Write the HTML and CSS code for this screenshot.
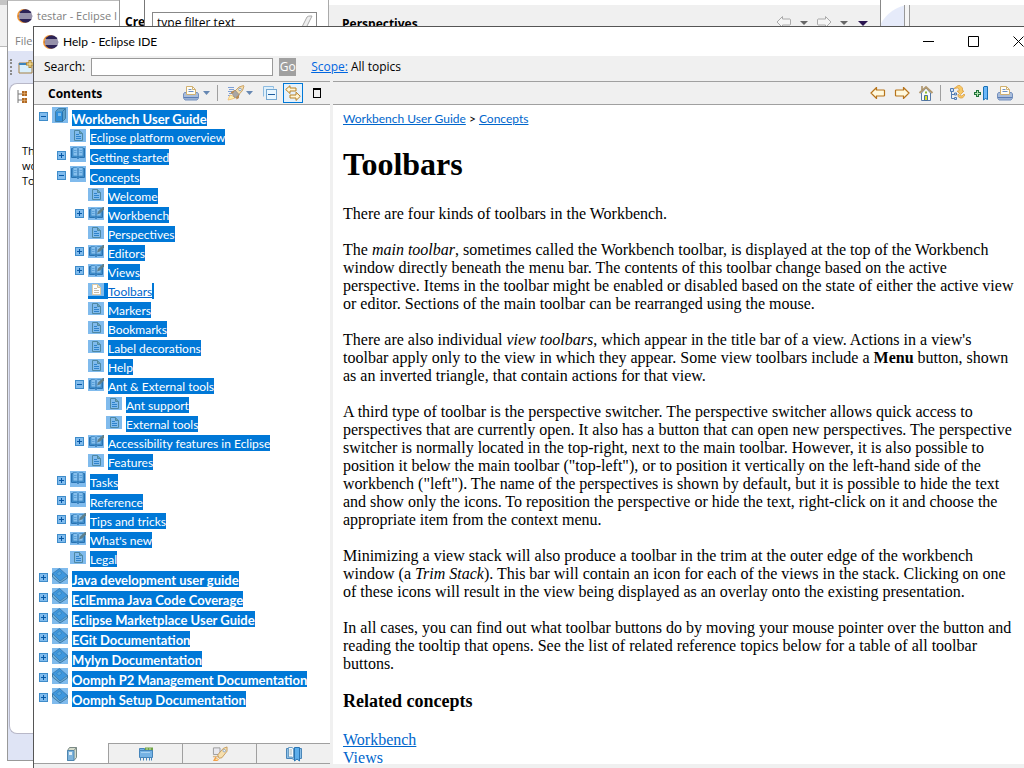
FILE: index.html
```
<!DOCTYPE html>
<html lang="en">
<head>
<meta charset="utf-8">
<title>Help - Eclipse IDE</title>
<link rel="stylesheet" href="styles.css">
</head>
<body>
<svg class="defs" aria-hidden="true">
  <symbol id="eclipse" viewBox="0 0 16 16"><circle cx="7" cy="8" r="7" fill="#f0983a"/><circle cx="8.500" cy="8" r="6.800" fill="#2c2255"/><path d="M2 6h13M2 8h13M2 10h13" stroke="#fff" stroke-width="1"/></symbol>
  <symbol id="toc-open" viewBox="0 0 16 16"><rect width="16" height="16" fill="#80bbed"/><path d="M3.500 4.500l3-3h7v10l-3 3h-7z" fill="#5a9fcb" stroke="#4280a8"/><path d="M4 4.500h6v9.500H4z" fill="#2f8fdb"/><path d="M6 6h3v3H6z" fill="#7cbbea"/><path d="M10.500 4.500v10M10.500 4.500l3-3" stroke="#2a73ad"/></symbol>
  <symbol id="toc-closed" viewBox="0 0 16 16"><rect width="16" height="16" fill="#80bbed"/><path d="M.500 6v3l7.500 6 7.500-5V7.500z" fill="#6fadd6" stroke="#3c7ba9"/><path d="M.500 5.500L7.500.500l8 7L8 13z" fill="#3f97de" stroke="#397aad" stroke-width=".8"/><path d="M4.500 5.500l3-2.300 2.500 2L7 7.700z" fill="#5ba7dd" stroke="#2f7cb9" stroke-width=".6"/></symbol>
  <symbol id="page" viewBox="0 0 16 13"><rect width="16" height="13" fill="#80bbed"/><path d="M4.500 1.500h5l3 3v7h-8z" fill="#80bbed" stroke="#4f88a3"/><path d="M9.500 1.500v3h3" fill="#6ba3b5" stroke="#4f88a3"/><path d="M6 5.500h3M6 7.500h5M6 9.500h5" stroke="#2f83cb"/></symbol>
  <symbol id="page-current" viewBox="0 0 16 13"><rect width="16" height="13" fill="#80bbed"/><path d="M4.500 1.500h5l3 3v7h-8z" fill="#fff" stroke="#e0cba4"/><path d="M9.500 1.500v3h3" fill="#f2e2c0" stroke="#d9c294"/><path d="M6 5.500h3M6 7.500h5M6 9.500h5" stroke="#c2bcae"/></symbol>
  <symbol id="book" viewBox="0 0 16 16"><rect width="16" height="16" fill="#80bbed"/><path d="M1.500 2.500h13v9H9.500L8 12.500 6.500 11.500h-5z" fill="#3f8fcf" stroke="#2a72b0"/><path d="M3 1.500h3.500L8 2.500l1.500-1H13v8.500H9.500L8 11l-1.500-1H3z" fill="#86c0ee" stroke="#4089c2" stroke-width=".8"/><path d="M8 3v8" stroke="#2068a8"/><path d="M4 4.500h2.500M4 6.500h2.500M9.500 4.500H12M9.500 6.500H12" stroke="#5ba1da"/></symbol>
  <symbol id="book-pen" viewBox="0 0 16 13"><rect width="16" height="13" fill="#80bbed"/><path d="M1.500 2.500h13v8H9.500L8 11.500 6.500 10.500h-5z" fill="#3f8fcf" stroke="#2a72b0"/><path d="M3 1.500h3.500L8 2.500l1.500-1H13V9H9.500L8 10l-1.500-1H3z" fill="#86c0ee" stroke="#4089c2" stroke-width=".8"/><path d="M8 3v7" stroke="#2068a8"/><path d="M4 4.500h2.500M4 6.500h2.500" stroke="#5ba1da"/><path d="M9 7.500l1-3L15 0h1v2.500L12 6.500z" fill="#5f7f8a"/></symbol>
  <symbol id="plus" viewBox="0 0 9 9"><rect x=".5" y=".5" width="8" height="8" fill="#80bbed" stroke="#3e8cca"/><path d="M2 4.500h5M4.500 2v5" stroke="#0758a5"/></symbol>
  <symbol id="minus" viewBox="0 0 9 9"><rect x=".5" y=".5" width="8" height="8" fill="#80bbed" stroke="#3e8cca"/><path d="M2 4.500h5" stroke="#0758a5"/></symbol>
  <symbol id="printer" viewBox="0 0 16 16"><path d="M1.500 7.500h13l1 1.500v4l-1.500 2H2l-1.500-2V9z" fill="#a9bddb" stroke="#7590bc"/><path d="M3.500 9.500v-8h6l3 3v5z" fill="#fffdf4" stroke="#d0b070"/><path d="M9.500 1.500v3h3" fill="none" stroke="#d0b070"/><path d="M5.500 4.500h3M5.500 6.500h5" stroke="#6c91c9"/><path d="M1 12.500h14" stroke="#5b7db5"/><path d="M2 14h12" stroke="#86a2cc"/></symbol>
  <symbol id="drop" viewBox="0 0 7 5"><path d="M0 0h7L3.500 4z" fill="#6687b2"/></symbol>
  <symbol id="rocket" viewBox="0 0 18 16"><path d="M1 2.500h6M2 4.500h5M1 6.500h4M2 8.500h3M1 10.500h2" stroke="#7c9fd6"/><path d="M1 15l2-5 3 1 2 2-3 1z" fill="#fff1b1" stroke="#f0b45f" stroke-width=".7"/><path d="M8 6l4-4 4.500-1.500.500.500-1.500 4.500-4 4.500z" fill="#f6dfae" stroke="#c0924e" stroke-width=".8"/><path d="M5 8l3-3 4.500 5L9 13l-2-1z" fill="#a9a7a5" stroke="#8d8276" stroke-width=".6"/><path d="M8 5L4.500 6.500l-1 2L6 8.500M12 9.500V13l-2.500 1.500L9 12" fill="#b98c55"/><circle cx="13" cy="4.500" r="1.300" fill="#fff" stroke="#7391b9" stroke-width=".8"/></symbol>
  <symbol id="collapse" viewBox="0 0 14 14"><path d="M.500 10.500V.500h10v2" fill="none" stroke="#8dbbe0"/><path d="M1 1h9v2H3v7H1z" fill="#dff0fb"/><rect x="3.500" y="3.500" width="10" height="10" fill="#eaf7ff" stroke="#74a8d2"/><path d="M5 8.500h7" stroke="#1f5c9e"/></symbol>
  <symbol id="sync" viewBox="0 0 16 16"><path d="M5 .700L.700 4.500 5 8.500V6h6V3H5z" fill="#fff5d5" stroke="#b88125"/><path d="M11 7.200V10H5v3h6v2.500l4.300-4.200z" fill="#fff5d5" stroke="#b88125"/></symbol>
  <symbol id="back" viewBox="0 0 16 12"><path d="M6.500.500L1 6l5.500 5.500V9H14l.5-.5v-5L14 3H6.500z" fill="#fff9de" stroke="#b7741b" stroke-width="1.200"/></symbol>
  <symbol id="forward" viewBox="0 0 16 12"><path d="M9.500.500L15 6l-5.500 5.500V9H2l-.5-.5v-5L2 3h7.500z" fill="#fff9de" stroke="#b7741b" stroke-width="1.200"/></symbol>
  <symbol id="back-off" viewBox="0 0 16 12"><path d="M6.500.500L1 6l5.500 5.500V9H14l.5-.5v-5L14 3H6.500z" fill="#f5f5f5" stroke="#aaa"/></symbol>
  <symbol id="forward-off" viewBox="0 0 16 12"><path d="M9.500.500L15 6l-5.500 5.500V9H2l-.5-.5v-5L2 3h7.500z" fill="#f5f5f5" stroke="#aaa"/></symbol>
  <symbol id="home" viewBox="0 0 14 16"><path d="M2.500 8v7.500h9V8L7 3z" fill="#f8faf9" stroke="#587aa7"/><path d="M.500 8L7 2l6.500 6" fill="none" stroke="#b39a70" stroke-width="2"/><path d="M3 5V1" stroke="#a78d62" stroke-width="1.500"/><path d="M5.500 15.500v-5h3v5z" fill="#d8e02c" stroke="#4b70a0"/><path d="M6 7.500h2" stroke="#8fbb31" stroke-width="2"/></symbol>
  <symbol id="tree-sync" viewBox="0 0 16 16"><path d="M2.500 4v9.500H6M3 9.500h3" fill="none" stroke="#527bb1"/><path d="M1.500 3.500h3v3h-3zM5.500 8h2v2h-2zM5.500 12.500h2v2h-2z" fill="#cfe0f5" stroke="#527bb1"/><path d="M5 3.500L9 .500h2l2.500 2.500v3H15l-3.500 3.500L8 6h2V4L8.500 3z" fill="#f7c968" stroke="#d9993a" stroke-width=".7"/><path d="M9 9v2.500l2 1.500h2.500l2.500-3-1-1-2 2-2-.5z" fill="#f7c968" stroke="#d9993a" stroke-width=".7"/></symbol>
  <symbol id="bookmark-add" viewBox="0 0 16 16"><path d="M3 5h3v2h2v3H6v2H3v-2H1V7h2z" fill="#1f7339"/><path d="M2 8.500h5M4.500 6v5" stroke="#b6e3b3"/><path d="M11 1.500h3.500v13l-2-1-2 1.500V2z" fill="#6bb7f8" stroke="#1970b5"/></symbol>
  <symbol id="toc" viewBox="0 0 12 16"><path d="M1.500 4.500l2-3h7v10l-2.500 3H1.500z" fill="#d6dccb" stroke="#7b8a86"/><path d="M1.500 4.500H8v10H1.500z" fill="#7fb4dc" stroke="#4e86b0"/><path d="M3 6h3v3H3z" fill="#e3eef4"/><path d="M8 4.500l2.500-3" stroke="#7b8a86"/></symbol>
  <symbol id="index" viewBox="0 0 14 14"><path d="M6 .500h8V4H6z" fill="#6ea345"/><path d="M8 1v2M11 1v2" stroke="#c8dfad"/><path d="M.500 3.500h13v7H.500z" fill="#76b3e4" stroke="#4585bb"/><path d="M.500 1.500h5v2h-5z" fill="#76b3e4" stroke="#4585bb"/><path d="M1.500 11v2.500M4.500 11v2.500M7.500 11v2.500M10.500 11v2.500M12.500 11v2.500" stroke="#4585bb"/><path d="M2 5.500h9" stroke="#a9d2f2"/></symbol>
  <symbol id="search-tab" viewBox="0 0 17 16"><path d="M1.500 1.500h7v7h-7z" fill="#e8e8ee" stroke="#999"/><path d="M1 10h6v1.500H1z" fill="#d8b98a"/><path d="M6 9l6-7 4-1.500L16 5l-5.500 7-3 .5z" fill="#f6dfae" stroke="#b98a45" stroke-width=".8"/><circle cx="13" cy="4.500" r="1.300" fill="#fff" stroke="#7391b9" stroke-width=".8"/><path d="M1 15.500L3.500 11l4 3-2 1.500z" fill="#f4a04a"/><path d="M3.500 14.500l1-2 2 1.500z" fill="#fff0a8"/></symbol>
  <symbol id="bookmark-tab" viewBox="0 0 16 16"><path d="M.500 2.500h15v10H9l-1.500 1-1.500-1H.500z" fill="#8dc0e8" stroke="#4a86b8"/><path d="M2.500 1.500H6l1.500 1v9.500L6 11H2.500z" fill="#f4f8fa" stroke="#6a9dc4"/><path d="M3.500 4h2.500M3.500 6h2.500M3.500 8h2.500" stroke="#a4b8bd"/><path d="M8.500 1.500h5v13.500l-2.500-2-2.500 2z" fill="#5caeeb" stroke="#2874b3"/></symbol>
  <symbol id="new" viewBox="0 0 16 14"><path d="M1 3h13v10H1z" fill="#d9effc" stroke="#a58147"/><path d="M1 3h10v2H1z" fill="#3d84bb"/><path d="M12 0v8M8 4h8" stroke="#b1872d" stroke-width="3"/><path d="M12 1v6M9 4h6" stroke="#ffedaa"/></symbol>
  <symbol id="hierarchy" viewBox="0 0 10 13"><path d="M1 0v13M1 4h4M1 10h4" stroke="#777" fill="none"/><path d="M5 1h5v5H5zM5 8h5v5H5z" fill="#b06a26"/><path d="M5 3.500h5M7.500 1v5M5 10.500h5M7.500 8v5" stroke="#e8b070" stroke-width=".6"/></symbol>
</svg>

<div class="desktop">
  <div class="far-window"></div>
  <section class="ide-window">
    <header class="ide-title"><svg class="i16"><use href="#eclipse"/></svg><span>testar - Eclipse I</span></header>
    <div class="ide-menu">File</div>
    <div class="ide-tools"><i class="grip"></i><svg class="i-new"><use href="#new"/></svg></div>
    <div class="ide-view"><svg class="i-hier"><use href="#hierarchy"/></svg><p>There are no<br>workspace<br>To</p></div>
  </section>
  <section class="wizard-window"><b>Cre</b></section>
  <section class="prefs-window">
    <div class="prefs-filter"><input type="text" value="type filter text" aria-label="Filter"><svg class="eraser" viewBox="0 0 12 14"><path d="M1 12L6 2q1-1 3-1h2L6 11q-1 2-3 2z" fill="#eee" stroke="#aaa"/></svg></div>
    <div class="prefs-page"><b>Perspectives</b><div class="prefs-nav"><svg class="i-arrow"><use href="#back-off"/></svg><i class="tri"></i><svg class="i-arrow"><use href="#forward-off"/></svg><i class="tri"></i><i class="tri dark"></i></div></div>
  </section>
  <div class="ide-edge"><i class="curve"></i><i class="sash"></i></div>

  <main class="help-window">
    <header class="titlebar">
      <svg class="i16"><use href="#eclipse"/></svg><h1>Help - Eclipse IDE</h1>
      <div class="win-buttons">
        <button aria-label="Minimize"><svg viewBox="0 0 11 11"><path d="M0 5.500h11"/></svg></button>
        <button aria-label="Maximize"><svg viewBox="0 0 11 11"><path d="M.500.500h10v10H.500z"/></svg></button>
        <button aria-label="Close"><svg viewBox="0 0 11 11"><path d="M.500.500l10 10M10.500.500l-10 10"/></svg></button>
      </div>
    </header>
    <form class="searchbar">
      <label for="q">Search:</label><input id="q" type="text"><button type="button" class="go">Go</button>
      <a href="#scope">Scope:</a><span>All topics</span>
    </form>
    <div class="panes">
      <aside class="nav">
        <div class="toolbar">
          <h2>Contents</h2>
          <div class="tools">
            <button aria-label="Print topics"><svg class="i16"><use href="#printer"/></svg></button>
            <button aria-label="Print menu" class="menu"><svg class="i-drop"><use href="#drop"/></svg></button>
            <i class="sep"></i>
            <button aria-label="Search topics"><svg class="i-rocket"><use href="#rocket"/></svg></button>
            <button aria-label="Search menu" class="tight"><svg class="i-drop"><use href="#drop"/></svg></button>
            <button aria-label="Collapse all" class="spaced"><svg class="i14"><use href="#collapse"/></svg></button>
            <button aria-label="Link with contents" class="toggled"><svg class="i16"><use href="#sync"/></svg></button>
            <button aria-label="Maximize pane" class="max"></button>
          </div>
        </div>
        <ul class="tree">
          <li><div class="row tall"><button aria-label="Collapse"><svg><use href="#minus"/></svg></button><svg class="ic"><use href="#toc-open"/></svg><a href="#t"><b>Workbench User Guide</b></a></div>
            <ul>
              <li><div class="row leaf"><svg class="ic"><use href="#page"/></svg><a href="#t">Eclipse platform overview</a></div></li>
              <li><div class="row tall"><button aria-label="Expand"><svg><use href="#plus"/></svg></button><svg class="ic"><use href="#book"/></svg><a href="#t">Getting started</a></div></li>
              <li><div class="row tall"><button aria-label="Collapse"><svg><use href="#minus"/></svg></button><svg class="ic"><use href="#book"/></svg><a href="#t">Concepts</a></div>
                <ul>
                  <li><div class="row leaf"><svg class="ic"><use href="#page"/></svg><a href="#t">Welcome</a></div></li>
                  <li><div class="row"><button aria-label="Expand"><svg><use href="#plus"/></svg></button><svg class="ic"><use href="#book-pen"/></svg><a href="#t">Workbench</a></div></li>
                  <li><div class="row leaf"><svg class="ic"><use href="#page"/></svg><a href="#t">Perspectives</a></div></li>
                  <li><div class="row"><button aria-label="Expand"><svg><use href="#plus"/></svg></button><svg class="ic"><use href="#book-pen"/></svg><a href="#t">Editors</a></div></li>
                  <li><div class="row"><button aria-label="Expand"><svg><use href="#plus"/></svg></button><svg class="ic"><use href="#book-pen"/></svg><a href="#t">Views</a></div></li>
                  <li><div class="row leaf current"><span class="icon-sel"><svg class="ic"><use href="#page-current"/></svg></span><a href="#t">Toolbars</a></div></li>
                  <li><div class="row leaf"><svg class="ic"><use href="#page"/></svg><a href="#t">Markers</a></div></li>
                  <li><div class="row leaf"><svg class="ic"><use href="#page"/></svg><a href="#t">Bookmarks</a></div></li>
                  <li><div class="row leaf"><svg class="ic"><use href="#page"/></svg><a href="#t">Label decorations</a></div></li>
                  <li><div class="row leaf"><svg class="ic"><use href="#page"/></svg><a href="#t">Help</a></div></li>
                  <li><div class="row"><button aria-label="Collapse"><svg><use href="#minus"/></svg></button><svg class="ic"><use href="#book-pen"/></svg><a href="#t">Ant &amp; External tools</a></div>
                    <ul>
                      <li><div class="row leaf"><svg class="ic"><use href="#page"/></svg><a href="#t">Ant support</a></div></li>
                      <li><div class="row leaf"><svg class="ic"><use href="#page"/></svg><a href="#t">External tools</a></div></li>
                    </ul></li>
                  <li><div class="row"><button aria-label="Expand"><svg><use href="#plus"/></svg></button><svg class="ic"><use href="#book-pen"/></svg><a href="#t">Accessibility features in Eclipse</a></div></li>
                  <li><div class="row leaf"><svg class="ic"><use href="#page"/></svg><a href="#t">Features</a></div></li>
                </ul></li>
              <li><div class="row tall"><button aria-label="Expand"><svg><use href="#plus"/></svg></button><svg class="ic"><use href="#book"/></svg><a href="#t">Tasks</a></div></li>
              <li><div class="row tall"><button aria-label="Expand"><svg><use href="#plus"/></svg></button><svg class="ic"><use href="#book"/></svg><a href="#t">Reference</a></div></li>
              <li><div class="row"><button aria-label="Expand"><svg><use href="#plus"/></svg></button><svg class="ic"><use href="#book-pen"/></svg><a href="#t">Tips and tricks</a></div></li>
              <li><div class="row"><button aria-label="Expand"><svg><use href="#plus"/></svg></button><svg class="ic"><use href="#book-pen"/></svg><a href="#t">What's new</a></div></li>
              <li><div class="row leaf"><svg class="ic"><use href="#page"/></svg><a href="#t">Legal</a></div></li>
            </ul></li>
          <li><div class="row tall"><button aria-label="Expand"><svg><use href="#plus"/></svg></button><svg class="ic"><use href="#toc-closed"/></svg><a href="#t"><b>Java development user guide</b></a></div></li>
          <li><div class="row tall"><button aria-label="Expand"><svg><use href="#plus"/></svg></button><svg class="ic"><use href="#toc-closed"/></svg><a href="#t"><b>EclEmma Java Code Coverage</b></a></div></li>
          <li><div class="row tall"><button aria-label="Expand"><svg><use href="#plus"/></svg></button><svg class="ic"><use href="#toc-closed"/></svg><a href="#t"><b>Eclipse Marketplace User Guide</b></a></div></li>
          <li><div class="row tall"><button aria-label="Expand"><svg><use href="#plus"/></svg></button><svg class="ic"><use href="#toc-closed"/></svg><a href="#t"><b>EGit Documentation</b></a></div></li>
          <li><div class="row tall"><button aria-label="Expand"><svg><use href="#plus"/></svg></button><svg class="ic"><use href="#toc-closed"/></svg><a href="#t"><b>Mylyn Documentation</b></a></div></li>
          <li><div class="row tall"><button aria-label="Expand"><svg><use href="#plus"/></svg></button><svg class="ic"><use href="#toc-closed"/></svg><a href="#t"><b>Oomph P2 Management Documentation</b></a></div></li>
          <li><div class="row tall"><button aria-label="Expand"><svg><use href="#plus"/></svg></button><svg class="ic"><use href="#toc-closed"/></svg><a href="#t"><b>Oomph Setup Documentation</b></a></div></li>
        </ul>
        <nav class="tabs">
          <button class="active" aria-label="Contents"><svg class="i-toc"><use href="#toc"/></svg></button>
          <button aria-label="Index"><svg class="i14"><use href="#index"/></svg></button>
          <button aria-label="Search results"><svg class="i16"><use href="#search-tab"/></svg></button>
          <button aria-label="Bookmarks"><svg class="i16"><use href="#bookmark-tab"/></svg></button>
        </nav>
      </aside>
      <section class="content">
        <div class="toolbar">
          <div class="tools wide">
            <button aria-label="Go back"><svg class="i-arrow"><use href="#back"/></svg></button>
            <button aria-label="Go forward"><svg class="i-arrow"><use href="#forward"/></svg></button>
            <button aria-label="Home"><svg class="i16"><use href="#home"/></svg></button>
            <i class="sep"></i>
            <button aria-label="Show in contents"><svg class="i16"><use href="#tree-sync"/></svg></button>
            <button aria-label="Bookmark document"><svg class="i16"><use href="#bookmark-add"/></svg></button>
            <button aria-label="Print page"><svg class="i16"><use href="#printer"/></svg></button>
          </div>
        </div>
        <article>
          <div class="crumbs"><a href="#g">Workbench User Guide</a> &gt; <a href="#c">Concepts</a></div>
          <h1>Toolbars</h1>
          <p>There are four kinds of toolbars in the Workbench.</p>
          <p>The <em>main toolbar</em>, sometimes called the Workbench toolbar, is displayed at the top of the Workbench window directly beneath the menu bar. The contents of this toolbar change based on the active perspective. Items in the toolbar might be enabled or disabled based on the state of either the active view or editor. Sections of the main toolbar can be rearranged using the mouse.</p>
          <p>There are also individual <em>view toolbars</em>, which appear in the title bar of a view. Actions in a view's toolbar apply only to the view in which they appear. Some view toolbars include a <b>Menu</b> button, shown as an inverted triangle, that contain actions for that view.</p>
          <p>A third type of toolbar is the perspective switcher. The perspective switcher allows quick access to perspectives that are currently open. It also has a button that can open new perspectives. The perspective switcher is normally located in the top-right, next to the main toolbar. However, it is also possible to position it below the main toolbar ("top-left"), or to position it vertically on the left-hand side of the workbench ("left"). The name of the perspectives is shown by default, but it is possible to hide the text and show only the icons. To reposition the perspective or hide the text, right-click on it and choose the appropriate item from the context menu.</p>
          <p>Minimizing a view stack will also produce a toolbar in the trim at the outer edge of the workbench window (a <em>Trim Stack</em>). This bar will contain an icon for each of the views in the stack. Clicking on one of these icons will result in the view being displayed as an overlay onto the existing presentation.</p>
          <p>In all cases, you can find out what toolbar buttons do by moving your mouse pointer over the button and reading the tooltip that opens. See the list of related reference topics below for a table of all toolbar buttons.</p>
          <h3>Related concepts</h3>
          <div class="related"><a href="#w">Workbench</a><br><a href="#v">Views</a></div>
        </article>
      </section>
    </div>
    <footer class="status"></footer>
  </main>
</div>
</body>
</html>
```
FILE: styles.css
```
* { box-sizing: border-box; }
body { margin: 0; font: 12px/16px "Open Sans", "Noto Sans", sans-serif; color: #000; background: #fff; }
h1, h2, h3, p, ul { margin: 0; padding: 0; }
ul { list-style: none; }
button { border: 0; background: none; padding: 0; font: inherit; display: flex; align-items: center; justify-content: center; }
svg { display: block; flex: none; }
.defs { position: absolute; width: 0; height: 0; }
.i16 { width: 16px; height: 16px; }
.i14 { width: 14px; height: 14px; }
.i-toc { width: 12px; height: 16px; }
.i-arrow { width: 16px; height: 12px; }
.i-drop { width: 7px; height: 5px; }
.i-rocket { width: 18px; height: 16px; }
.i-new { width: 16px; height: 14px; }
.i-hier { width: 10px; height: 13px; }

.desktop { position: relative; height: 100vh; overflow: hidden; background: #fff; }

/* Windows stacked behind the help window */
.far-window { position: absolute; left: 0; top: 0; width: 8px; height: 47px; background: #f0f0f0; border-top: 5px solid #c4c4c4; border-bottom: 1px solid #bbb; }
.ide-window { position: absolute; left: 7px; top: 0; bottom: 7px; width: 113px; display: flex; flex-direction: column; background: #dfe4f5; border: 1px solid #999; border-top-color: #bbb; color: #808080; }
.ide-title { display: flex; align-items: center; gap: 4px; height: 30px; padding-left: 9px; background: #fff; white-space: nowrap; overflow: hidden; font-size: 11px; }
.ide-menu { height: 20px; padding: 2px 7px; background: #fff; font-size: 11px; }
.ide-tools { display: flex; align-items: center; gap: 6px; height: 32px; padding-left: 2px; }
.grip { width: 2px; height: 16px; border-left: 2px dotted #8b8b8b; }
.ide-view { flex: 1; margin: 0 0 26px 1px; border: 1px solid #b8b8c8; border-right: 0; border-radius: 8px; background: #fff; padding: 6px 7px; color: #000; white-space: nowrap; overflow: hidden; }
.ide-view p { margin-top: 40px; padding-left: 5px; line-height: 15px; font-size: 11px; }
.wizard-window { position: absolute; left: 119px; top: 0; width: 26px; height: 40px; background: #fff; border-right: 1px solid #777; border-left: 1px solid #999; padding: 14px 0 0 5px; overflow: hidden; font-size: 12px; }
.prefs-window { position: absolute; left: 145px; top: 0; right: 143px; height: 40px; display: flex; background: #fff; border-right: 1px solid #888; }
.prefs-filter { width: 184px; padding: 12px 11px 0 7px; border-right: 1px solid #aaa; position: relative; }
.prefs-filter input { width: 100%; height: 20px; border: 1px solid #888; font: inherit; padding: 0 4px; background: #fff; }
.eraser { position: absolute; right: 15px; top: 15px; width: 12px; height: 14px; }
.prefs-page { flex: 1; display: flex; justify-content: space-between; margin-top: 5px; padding: 11px 12px 0 13px; background: #f0f0f0; }
.prefs-nav { display: flex; gap: 8px; align-items: flex-start; }
.prefs-nav .tri { margin-top: 5px; border: 4px solid transparent; border-top-color: #666; border-bottom: 0; }
.prefs-nav .tri.dark { margin-left: 2px; border-width: 5px; border-bottom: 0; border-top-color: #2a1450; }
.ide-edge { position: absolute; right: 0; top: 5px; width: 143px; height: 30px; background: #f0f0f0; display: flex; }
.curve { width: 24px; background: radial-gradient(circle at 32px 36px, #e6ebfa 36px, #fff 37px); border-right: 1px solid #999; }
.sash { width: 5px; border-right: 1px solid #999; background: #f5f5f5; }

/* Help window */
.help-window { position: absolute; left: 33px; right: -17px; top: 26px; bottom: 0; display: flex; flex-direction: column; background: #f0f0f0; border-left: 1px solid #555; border-top: 1px solid #555; }
.titlebar { display: flex; align-items: center; height: 29px; padding-left: 9px; gap: 4px; background: #fff; }
.titlebar h1 { font: 12px/16px Lato, "Open Sans", sans-serif; }
.win-buttons { display: flex; margin-left: auto; }
.win-buttons button { width: 45px; height: 29px; }
.win-buttons svg { width: 11px; height: 11px; fill: none; stroke: #000; }
.searchbar { display: flex; align-items: center; height: 25px; padding: 0 10px 4px; }
.searchbar input { width: 182px; height: 18px; margin: 0 6px; border: 1px solid #999; background: #fff; padding: 0 2px; font: inherit; }
.searchbar .go { width: 17px; height: 18px; background: #a0a0a0; color: #fff; }
.searchbar a { margin: 0 3px 0 15px; color: #0066e0; }
.panes { flex: 1; display: flex; min-height: 0; }
.nav { width: 299px; display: flex; flex-direction: column; border-right: 3px solid #f0f0f0; background: #fff; }
.content { flex: 1; min-width: 0; display: flex; flex-direction: column; background: #fff; padding-right: 17px; }
.toolbar { flex: none; display: flex; align-items: center; height: 24px; background: #f0f0f0; border-top: 1px solid #a0a0a0; border-bottom: 1px solid #a0a0a0; }
.content .toolbar { margin-right: -17px; padding-right: 17px; }
.toolbar h2 { font-size: 12px; padding: 1px 0 0 14px; }
.tools { display: flex; align-items: center; margin-left: auto; padding-right: 9px; }
.tools .menu { margin-left: 4px; }
.tools .sep { width: 1px; height: 16px; margin: 0 9px 0 7px; background: #a0a0a0; }
.tools .tight { margin-left: 1px; }
.tools .spaced { margin: 0 6px 0 10px; }
.tools .toggled { width: 20px; height: 20px; border: 1px solid #0078d7; background: #e5f1fb; }
.tools .max { width: 8px; height: 10px; margin-left: 10px; border: 1px solid #000; border-top-width: 2px; }
.tools.wide { gap: 8px; padding-right: 11px; }
.tools.wide .sep { margin: 0 0 0 -2px; }

.tree { flex: 1; min-height: 0; overflow: hidden; padding: 2px 0 0 5px; font-family: Lato, "Open Sans", sans-serif; }
.tree b { font-size: 13px; }
.tree ul { padding-left: 18px; }
.row { display: flex; align-items: flex-start; gap: 4px; height: 19px; padding-top: 2px; white-space: nowrap; }
.row button { flex: none; margin-top: 2px; }
.row button svg { width: 9px; height: 9px; }
.row .ic { width: 16px; height: 13px; }
.row a { height: 16px; padding-top: 1px; background: #0078d7; color: #fff; text-decoration: none; }
.row.tall { height: 20px; padding-top: 0; }
.row.tall button { margin-top: 5px; }
.row.tall .ic { height: 16px; }
.row.tall a { margin-top: 3px; }
.row.leaf { padding-left: 13px; }
.row.current { gap: 0; }
.icon-sel { width: 20px; height: 16px; background: #0078d7; }
.row.current a { background: #fff; color: #0066cc; border-right: 2px solid #0078d7; text-decoration: underline; }

.tabs { display: flex; height: 21px; background: #f0f0f0; border-bottom: 1px solid #a0a0a0; }
.tabs button { flex: 1; border-top: 1px solid #a0a0a0; border-left: 1px solid #a0a0a0; }
.tabs .active { background: #fff; border-color: #fff; }
.status { height: 4px; }

article { flex: 1; min-height: 0; overflow: hidden; padding: 6px 8px 0 10px; font: 16px/18px "Liberation Serif", serif; }
article a { color: #0066cc; }
.crumbs { font: 12px/16px Lato, "Open Sans", sans-serif; }
article h1 { margin: 19px 0 23px; font-size: 32px; line-height: 36px; }
article p { margin: 0 0 18px; }
article h3 { margin: 0 0 20px; font-size: 18px; line-height: 20px; }
```
